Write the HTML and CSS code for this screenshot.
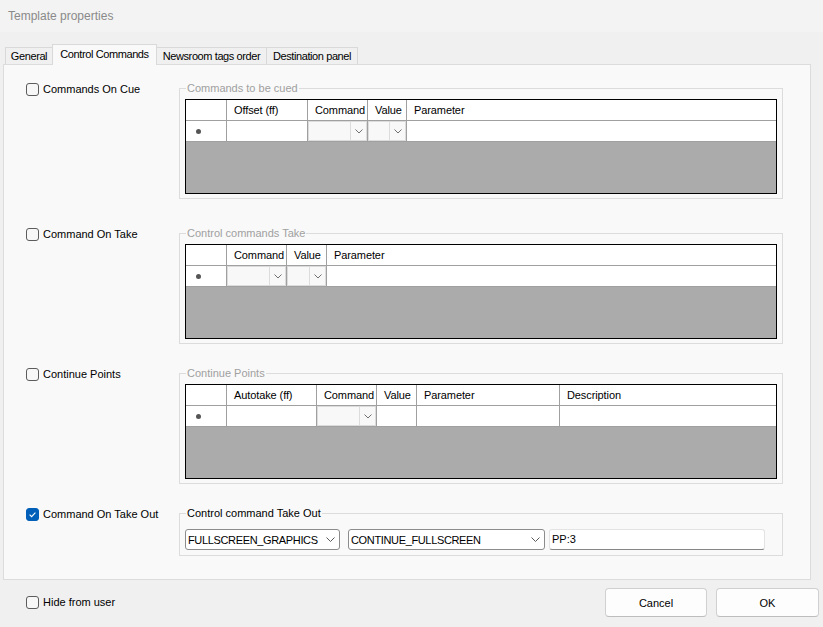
FILE: index.html
```html
<!DOCTYPE html>
<html>
<head>
<meta charset="utf-8">
<title>Template properties</title>
<link rel="stylesheet" href="styles.css">
</head>
<body>
<div class="window">
  <div class="titlebar">Template properties</div>

  <div class="tabs">
    <div class="tab t-general">General</div>
    <div class="tab active t-cc">Control Commands</div>
    <div class="tab t-news">Newsroom tags order</div>
    <div class="tab t-dest">Destination panel</div>
  </div>

  <div class="panel">
    <div class="section s1">
      <div class="checkcol">
        <div class="check"><span class="box"></span><span class="lbl">Commands On Cue</span></div>
      </div>
      <fieldset class="group disabled">
        <legend>Commands to be cued</legend>
        <div class="grid">
          <div class="grow head g1">
            <div class="cell"></div>
            <div class="cell">Offset (ff)</div>
            <div class="cell">Command</div>
            <div class="cell">Value</div>
            <div class="cell">Parameter</div>
          </div>
          <div class="grow data g1">
            <div class="cell rh"><span class="star"></span></div>
            <div class="cell"></div>
            <div class="cell"><div class="dcombo"><span class="face"></span><span class="dbtn"><svg width="8" height="5" viewBox="0 0 8 5"><path d="M0.5 0.5 L4 4 L7.5 0.5" fill="none" stroke="#707070" stroke-width="1"/></svg></span></div></div>
            <div class="cell"><div class="dcombo"><span class="face"></span><span class="dbtn"><svg width="8" height="5" viewBox="0 0 8 5"><path d="M0.5 0.5 L4 4 L7.5 0.5" fill="none" stroke="#707070" stroke-width="1"/></svg></span></div></div>
            <div class="cell"></div>
          </div>
          <div class="empty"></div>
        </div>
      </fieldset>
    </div>

    <div class="section s2">
      <div class="checkcol">
        <div class="check"><span class="box"></span><span class="lbl">Command On Take</span></div>
      </div>
      <fieldset class="group disabled">
        <legend>Control commands Take</legend>
        <div class="grid">
          <div class="grow head g2">
            <div class="cell"></div>
            <div class="cell">Command</div>
            <div class="cell">Value</div>
            <div class="cell">Parameter</div>
          </div>
          <div class="grow data g2">
            <div class="cell rh"><span class="star"></span></div>
            <div class="cell"><div class="dcombo"><span class="face"></span><span class="dbtn"><svg width="8" height="5" viewBox="0 0 8 5"><path d="M0.5 0.5 L4 4 L7.5 0.5" fill="none" stroke="#707070" stroke-width="1"/></svg></span></div></div>
            <div class="cell"><div class="dcombo"><span class="face"></span><span class="dbtn"><svg width="8" height="5" viewBox="0 0 8 5"><path d="M0.5 0.5 L4 4 L7.5 0.5" fill="none" stroke="#707070" stroke-width="1"/></svg></span></div></div>
            <div class="cell"></div>
          </div>
          <div class="empty"></div>
        </div>
      </fieldset>
    </div>

    <div class="section s3">
      <div class="checkcol">
        <div class="check"><span class="box"></span><span class="lbl">Continue Points</span></div>
      </div>
      <fieldset class="group disabled">
        <legend>Continue Points</legend>
        <div class="grid">
          <div class="grow head g3">
            <div class="cell"></div>
            <div class="cell">Autotake (ff)</div>
            <div class="cell">Command</div>
            <div class="cell">Value</div>
            <div class="cell">Parameter</div>
            <div class="cell">Description</div>
          </div>
          <div class="grow data g3">
            <div class="cell rh"><span class="star"></span></div>
            <div class="cell"></div>
            <div class="cell"><div class="dcombo"><span class="face"></span><span class="dbtn"><svg width="8" height="5" viewBox="0 0 8 5"><path d="M0.5 0.5 L4 4 L7.5 0.5" fill="none" stroke="#707070" stroke-width="1"/></svg></span></div></div>
            <div class="cell"></div>
            <div class="cell"></div>
            <div class="cell"></div>
          </div>
          <div class="empty"></div>
        </div>
      </fieldset>
    </div>

    <div class="section s4">
      <div class="checkcol">
        <div class="check"><span class="box checked"><svg width="13" height="13" viewBox="0 0 13 13"><path d="M3.6 6.7 L5.6 8.6 L9.4 4.6" fill="none" stroke="#ffffff" stroke-width="1.1"/></svg></span><span class="lbl">Command On Take Out</span></div>
      </div>
      <fieldset class="group active-group">
        <legend>Control command Take Out</legend>
        <div class="controls">
          <div class="combo c1"><span class="txt">FULLSCREEN_GRAPHICS</span><span class="arrow"><svg width="9" height="5" viewBox="0 0 9 5"><path d="M0.5 0.5 L4.5 4.5 L8.5 0.5" fill="none" stroke="#5a5a5a" stroke-width="1"/></svg></span></div>
          <div class="combo c2"><span class="txt">CONTINUE_FULLSCREEN</span><span class="arrow"><svg width="9" height="5" viewBox="0 0 9 5"><path d="M0.5 0.5 L4.5 4.5 L8.5 0.5" fill="none" stroke="#5a5a5a" stroke-width="1"/></svg></span></div>
          <div class="textbox">PP:3</div>
        </div>
      </fieldset>
    </div>
  </div>

  <div class="bottombar">
    <div class="check"><span class="box"></span><span class="lbl">Hide from user</span></div>
    <div class="buttons">
      <button class="btn cancel">Cancel</button>
      <button class="btn ok">OK</button>
    </div>
  </div>
</div>
</body>
</html>
```

FILE: styles.css
```css
html, body {
  margin: 0;
  padding: 0;
}
body {
  background: #f0f0f0;
  font-family: "Liberation Sans", Arial, sans-serif;
  font-size: 11px;
  color: #000;
}
.window {
  width: 823px;
  height: 627px;
  overflow: hidden;
  background: #f0f0f0;
}
.titlebar {
  height: 32px;
  line-height: 32px;
  padding-left: 8px;
  font-size: 12px;
  color: #8a8a8a;
  background: #f3f3f3;
}

/* tabs */
.tabs {
  display: flex;
  align-items: flex-end;
  height: 20px;
  margin-top: 12px;
  padding-left: 5px;
}
.tab {
  box-sizing: border-box;
  height: 17px;
  line-height: 17px;
  text-align: center;
  white-space: nowrap;
  letter-spacing: -0.4px;
  border: 1px solid #d9d9d9;
  border-bottom: none;
  background: #f0f0f0;
  margin-right: -1px;
  color: #000;
}
.tab.active {
  position: relative;
  z-index: 1;
  height: 21px;
  line-height: 19px;
  margin-bottom: -1px;
  background: #f9f9f9;
  align-self: flex-start;
}
.t-general { width: 48px; }
.t-cc { width: 105px; }
.t-news { width: 111px; }
.t-dest { width: 92px; }

/* panel */
.panel {
  box-sizing: border-box;
  width: 808px;
  height: 516px;
  margin-left: 3px;
  border: 1px solid #dcdcdc;
  background: #f9f9f9;
  padding-top: 16px;
  display: flex;
  flex-direction: column;
  gap: 22px;
}
.section {
  display: flex;
  align-items: flex-start;
}
.section.s1 {
  margin-bottom: 5px;
}
.checkcol {
  box-sizing: border-box;
  width: 175px;
  padding-left: 22px;
  padding-top: 2px;
}
.check {
  display: flex;
  align-items: center;
  height: 13px;
  gap: 4px;
  white-space: nowrap;
}
.check .lbl {
  line-height: 13px;
  color: #000;
}
.box {
  box-sizing: border-box;
  width: 13px;
  height: 13px;
  border: 1px solid #5c5c5c;
  border-radius: 3px;
  background: #f7f7f7;
  flex: none;
}
.box.checked {
  border-color: #005fb8;
  background: #005fb8;
}
.box.checked svg {
  display: block;
  margin: -1px;
}

/* group boxes */
.group {
  box-sizing: border-box;
  width: 604px;
  min-width: 0;
  margin: 0;
  padding: 4px 5px 4px 5px;
  border: 1px solid #dcdcdc;
}
.group legend {
  padding: 0 1px;
  margin-left: 1px;
  line-height: 14px;
  height: 14px;
  white-space: nowrap;
}
.group.disabled legend {
  color: #a0a0a0;
}
.group.active-group {
  padding-top: 9px;
  padding-bottom: 5px;
}

/* data grids */
.grid {
  box-sizing: border-box;
  height: 95px;
  border: 1px solid #000;
  display: flex;
  flex-direction: column;
  background: #ababab;
}
.grow {
  box-sizing: border-box;
  height: 21px;
  display: grid;
  border-bottom: 1px solid #a0a0a0;
  background: #fff;
}
.g1 { grid-template-columns: 41px 81px 60px 39px 1fr; }
.g2 { grid-template-columns: 41px 60px 40px 1fr; }
.g3 { grid-template-columns: 41px 90px 60px 40px 143px 1fr; }
.cell {
  box-sizing: border-box;
  border-right: 1px solid #a0a0a0;
  height: 20px;
  overflow: hidden;
  white-space: nowrap;
}
.cell:last-child {
  border-right: none;
}
.head .cell {
  padding-left: 7px;
  line-height: 20px;
  letter-spacing: -0.1px;
  color: #000;
}
.rh {
  display: flex;
  align-items: center;
  padding-left: 10px;
}
.star {
  width: 5px;
  height: 5px;
  border-radius: 50%;
  background: #555;
}
.dcombo {
  box-sizing: border-box;
  display: flex;
  height: 20px;
  border: 1px solid #dcdcdc;
  background: #f8f8f8;
}
.dcombo .face {
  flex: 1;
}
.dcombo .dbtn {
  width: 15px;
  border-left: 1px solid #dcdcdc;
  display: flex;
  align-items: center;
  justify-content: center;
}
.dcombo svg,
.combo svg {
  display: block;
}
.empty {
  flex: 1;
  background: #ababab;
}

/* take out controls */
.controls {
  display: flex;
  align-items: center;
  height: 21px;
}
.combo {
  box-sizing: border-box;
  height: 21px;
  display: flex;
  align-items: center;
  border: 1px solid #8c8c8c;
  border-radius: 3px;
  background: #fff;
  padding-left: 2px;
  white-space: nowrap;
}
.combo .txt {
  flex: 1;
  letter-spacing: -0.35px;
  overflow: hidden;
}
.combo .arrow {
  width: 18px;
  flex: none;
  display: flex;
  justify-content: center;
}
.c1 { width: 155px; }
.c2 { width: 197px; margin-left: 8px; }
.textbox {
  box-sizing: border-box;
  width: 216px;
  height: 21px;
  line-height: 19px;
  margin-left: 4px;
  padding-left: 2px;
  border: 1px solid #e3e3e3;
  border-bottom-color: #868686;
  border-radius: 3px;
  background: #fff;
}

/* bottom bar */
.bottombar {
  display: flex;
  align-items: center;
  justify-content: space-between;
  height: 29px;
  margin-top: 8px;
  padding-left: 26px;
  padding-right: 4px;
}
.buttons {
  display: flex;
  gap: 9px;
}
.btn {
  box-sizing: border-box;
  height: 29px;
  border: 1px solid #d0d0d0;
  border-bottom-color: #bdbdbd;
  border-radius: 4px;
  background: #fdfdfd;
  font-family: "Liberation Sans", Arial, sans-serif;
  font-size: 11px;
  color: #000;
  padding: 0;
}
.cancel { width: 102px; }
.ok { width: 103px; }
```
